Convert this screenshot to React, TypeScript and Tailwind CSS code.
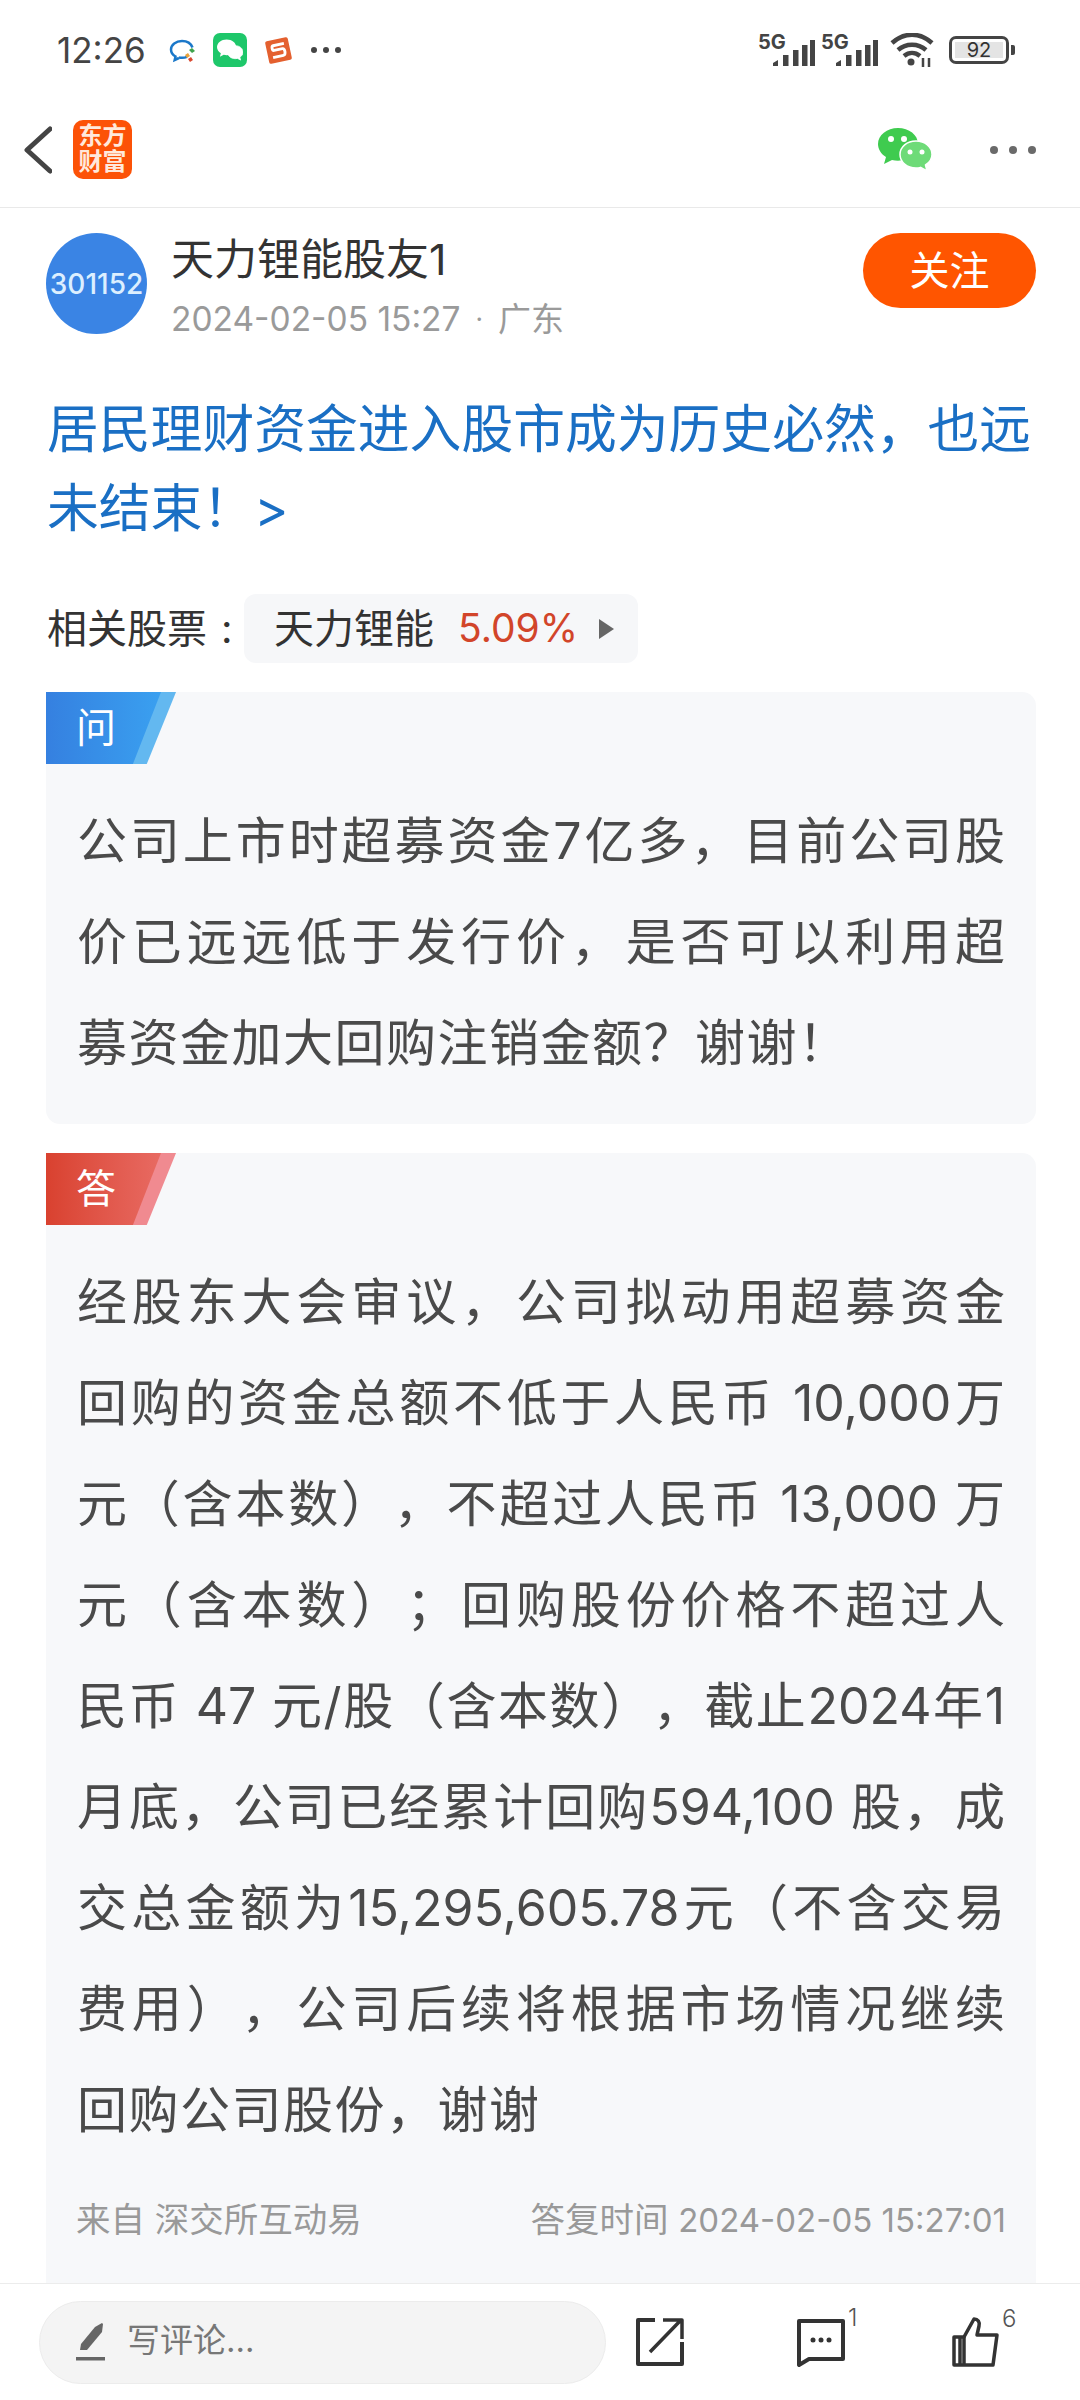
import type { ReactNode } from "react";

const questionLines = [
  "公司上市时超募资金7亿多，目前公司股",
  "价已远远低于发行价，是否可以利用超",
  "募资金加大回购注销金额？谢谢！",
];

const answerLines = [
  "经股东大会审议，公司拟动用超募资金",
  "回购的资金总额不低于人民币 10,000万",
  "元（含本数），不超过人民币 13,000 万",
  "元（含本数）；回购股份价格不超过人",
  "民币 47 元/股（含本数），截止2024年1",
  "月底，公司已经累计回购594,100 股，成",
  "交总金额为15,295,605.78元（不含交易",
  "费用），公司后续将根据市场情况继续",
  "回购公司股份，谢谢",
];

function Bubbles({ className, back, front }: { className: string; back: string; front: string }) {
  return (
    <svg viewBox="0 0 54 44" className={className}>
      <path d="M20 0C9 0 0 7 0 16c0 5 3 10 8 13l-2 7 8-4c2 .5 4 .7 6 .7 11 0 20-7.500 20-16.700S31 0 20 0z" fill={back} />
      <path d="M38 13c-9 0-16 6-16 13.500S29 40 38 40c1.500 0 3-.2 4.500-.6L49 43l-1.500-6c4-2.500 6.500-6.200 6.500-10.500C54 19 47 13 38 13z" fill={front} stroke="#fff" strokeWidth="1.500" />
      <circle cx="13" cy="11" r="3" fill="#fff" />
      <circle cx="26" cy="11" r="3" fill="#fff" />
      <circle cx="32" cy="24" r="2.500" fill="#fff" />
      <circle cx="44" cy="24" r="2.500" fill="#fff" />
    </svg>
  );
}

function Signal() {
  return (
    <div className="relative h-[32px] w-[57px]">
      <span className="absolute left-0 top-0 text-[20px] leading-[17px] font-bold text-[#444]">5G</span>
      <svg viewBox="0 0 42 26" className="absolute right-0 bottom-0 h-[26px] w-[42px]" fill="#444">
        <path d="M0 26v-3l5-3v6zM10 26V15h5.500v11zM20 26V10h5.500v16zM29 26V5h5.500v21zM37 26V0h5v26z" />
      </svg>
    </div>
  );
}

function StatusBar() {
  return (
    <div className="flex h-[100px] items-center pl-[57px] pr-[65px] text-[#444]">
      <span className="w-[86px] whitespace-nowrap text-[35px] leading-none">12:26</span>
      <div className="ml-[22px] flex items-center gap-[14px]">
        <svg viewBox="0 0 34 34" className="h-[34px] w-[34px]">
          <path d="M17 8c-6 0-11 3.500-11 8.500 0 3 1.800 5.500 4.500 7l-.8 3.500 4.300-2" fill="none" stroke="#1b78c9" strokeWidth="2.500" />
          <path d="M14 24.500c1 .2 2 .3 3 .3 2 0 3.500-.3 5-1M17 8c5 0 9 2.500 10.500 6.500" fill="none" stroke="#1b78c9" strokeWidth="2.500" />
          <path d="M24 17l3-2 3 3-3 2z" fill="#3fa34d" />
          <path d="M20 22l3-2 2 3-3 2z" fill="#e9a23b" />
          <path d="M23 26l3-2 2 3-3 2z" fill="#d9482f" />
        </svg>
        <div className="flex h-[34px] w-[34px] items-center justify-center rounded-[7px] bg-[#1ec76a]">
          <Bubbles className="h-[22px] w-[26px]" back="#ffffff" front="#ffffff" />
        </div>
        <div className="flex h-[34px] w-[34px] items-center justify-center">
          <svg viewBox="0 0 26 26" className="h-[25px] w-[25px] -rotate-12">
            <rect x="1" y="1" width="24" height="24" rx="2" fill="#e4602f" />
            <path d="M20 7H8.500C6.500 7 6.500 12 8.500 12h9c2.500 0 2.500 7-.5 7H6" fill="none" stroke="#fff" strokeWidth="3" />
          </svg>
        </div>
        <div className="ml-[2px] flex items-center gap-[6px]">
          <span className="h-[6px] w-[6px] rounded-full bg-[#444]" />
          <span className="h-[6px] w-[6px] rounded-full bg-[#444]" />
          <span className="h-[6px] w-[6px] rounded-full bg-[#444]" />
        </div>
      </div>
      <div className="ml-auto flex items-center gap-[6px]">
        <Signal />
        <Signal />
        <svg viewBox="0 0 44 34" className="ml-[6px] h-[34px] w-[44px]" fill="none" stroke="#444" strokeWidth="4.500">
          <path d="M2 10c12-11 28-11 40 0" />
          <path d="M8 17c8-7 20-7 28 0" />
          <path d="M14 23c5-4 11-4 16 0" />
          <circle cx="21" cy="29" r="3.500" fill="#444" stroke="none" />
          <path d="M33 25v9M39 25v9" strokeWidth="2.500" />
        </svg>
        <div className="ml-[9px] flex items-center gap-[2px]">
          <div className="flex h-[28px] w-[60px] items-center justify-center rounded-[7px] border-[3px] border-[#444] p-[3px]">
            <span className="flex h-full w-full items-center justify-center bg-[#e4e4e4] text-[20px] leading-none text-[#333]">
              92
            </span>
          </div>
          <span className="h-[10px] w-[4px] rounded-r-[2px] bg-[#444]" />
        </div>
      </div>
    </div>
  );
}

function NavBar() {
  return (
    <div className="flex h-[108px] items-center border-b border-[#e9e9e9] pl-[24px] pr-[44px]">
      <svg viewBox="0 0 28 48" className="mb-[8px] h-[48px] w-[28px]" fill="none" stroke="#444" strokeWidth="5" strokeLinecap="round" strokeLinejoin="round">
        <path d="M26 3L3 24l23 21" />
      </svg>
      <div className="mb-[9px] ml-[21px] flex h-[59px] w-[59px] flex-col items-center justify-center rounded-[10px] bg-[#fc5207] text-[24px] leading-[26px] font-bold text-[#ffe9dc]">
        <span>东方</span>
        <span>财富</span>
      </div>
      <Bubbles className="mb-[8px] ml-auto h-[44px] w-[54px]" back="#3fcb4f" front="#6edb78" />
      <div className="mb-[8px] ml-[58px] flex items-center gap-[11px]">
        <span className="h-[8px] w-[8px] rounded-full bg-[#6a6a6a]" />
        <span className="h-[8px] w-[8px] rounded-full bg-[#6a6a6a]" />
        <span className="h-[8px] w-[8px] rounded-full bg-[#6a6a6a]" />
      </div>
    </div>
  );
}

function AuthorRow() {
  return (
    <div className="flex pl-[46px] pr-[44px] pt-[25px]">
      <div className="flex h-[101px] w-[101px] shrink-0 items-center justify-center rounded-full bg-[#3a84e4] text-[28px] font-medium text-[#dcefff]">
        301152
      </div>
      <div className="ml-[24px] min-w-0">
        <div className="pt-[3px] text-[43px] leading-[46px] text-[#333]">天力锂能股友1</div>
        <div className="mt-[15px] flex items-center leading-[44px] text-[#9a9a9a]">
          <span className="text-[33.500px]">2024-02-05 15:27</span>
          <span className="mx-[15px] text-[26px]">·</span>
          <span className="text-[33px]">广东</span>
        </div>
      </div>
      <button
        type="button"
        className="ml-auto flex h-[75px] w-[173px] items-center justify-center rounded-full bg-[#ff5500] text-[40px] text-[#fff]"
      >
        关注
      </button>
    </div>
  );
}

function RelatedStock() {
  return (
    <div className="mt-[46px] flex items-center whitespace-nowrap pl-[47px] text-[40px] text-[#333]">
      <span className="w-[197px]">
        相关股票<span className="ml-[14px]">:</span>
      </span>
      <div className="flex h-[69px] w-[394px] items-center rounded-[12px] bg-[#f6f7f9] pl-[30px]">
        <span>天力锂能</span>
        <span className="ml-[24px] text-[39px] text-[#d2452a]">5.09%</span>
        <svg viewBox="0 0 16 20" className="ml-[20px] h-[20px] w-[16px]" fill="#666">
          <path d="M1 0l15 10L1 20z" />
        </svg>
      </div>
    </div>
  );
}

function Tag({ label, tone }: { label: string; tone: "blue" | "red" }) {
  const strip = tone === "blue" ? "bg-[#63b8f0]" : "bg-[#f08a90]";
  const face =
    tone === "blue"
      ? "bg-gradient-to-r from-[#3580e0] to-[#3aa0f0]"
      : "bg-gradient-to-r from-[#d9412f] to-[#e86a62]";
  return (
    <div className={`h-[72px] w-[130px] rounded-tl-[14px] ${strip} [clip-path:polygon(0_0,100%_0,77.500%_100%,0_100%)]`}>
      <div
        className={`flex h-full w-[115px] items-center pl-[30px] text-[40px] text-[#fff] ${face} [clip-path:polygon(0_0,100%_0,75.600%_100%,0_100%)]`}
      >
        {label}
      </div>
    </div>
  );
}

function Lines({ lines }: { lines: string[] }) {
  return (
    <div className="px-[31px] text-[50px] leading-[101px] text-[#4a4a4a] [text-spacing-trim:space-all]">
      {lines.map((line, i) => (
        // every line but the last is stretched to the full width
        <div key={i} className={i < lines.length - 1 ? "text-justify [text-align-last:justify]" : "tracking-[1.500px]"}>
          {line}
        </div>
      ))}
    </div>
  );
}

function Card({ children }: { children: ReactNode }) {
  return <div className="mx-[46px] w-[990px] rounded-[14px] bg-[#f7f8fa]">{children}</div>;
}

function BottomBar() {
  return (
    <div className="relative flex h-[117px] shrink-0 items-center border-t border-[#ececec] bg-white pl-[39px]">
      <div className="flex h-[83px] w-[567px] items-center rounded-full border border-[#ececec] bg-[#f4f4f4] pl-[36px]">
        <svg viewBox="0 0 30 40" className="h-[40px] w-[30px]" fill="#666">
          <path d="M19 5l7-4 1 1-1 8L11 28H4l1-6z" />
          <rect x="0" y="35" width="29" height="3.500" />
        </svg>
        <span className="mb-[3px] ml-[21px] text-[33px] leading-none text-[#777]">写评论...</span>
      </div>
      <svg viewBox="0 0 48 48" className="ml-[30px] h-[48px] w-[48px]" fill="none" stroke="#333" strokeWidth="4" strokeLinejoin="round">
        <path d="M19 2H2v44h44V24" />
        <path d="M14 34L44 3M27 2h19v19" strokeWidth="3.500" />
      </svg>
      <div className="relative ml-[113px] h-[50px] w-[48px]">
        <svg viewBox="0 0 48 50" className="h-[50px] w-[48px]" fill="none" stroke="#333" strokeWidth="4" strokeLinejoin="round">
          <path d="M2 4h44v38H12L2 48z" />
          <circle cx="16" cy="23" r="2.500" fill="#333" stroke="none" />
          <circle cx="24" cy="23" r="2.500" fill="#333" stroke="none" />
          <circle cx="32" cy="23" r="2.500" fill="#333" stroke="none" />
        </svg>
        <span className="absolute left-[51px] top-[-11px] text-[24px] leading-none font-light text-[#555]">1</span>
      </div>
      <div className="relative ml-[107px] h-[50px] w-[48px]">
        <svg viewBox="0 0 48 50" className="h-[50px] w-[48px]" fill="none" stroke="#333" strokeWidth="3.500" strokeLinejoin="round">
          <path d="M12 20L22 2c4 0 6 3 5 7l-2 9h20l-4 30H2V20z" />
          <path d="M8 20v28M12 20v28" />
        </svg>
        <span className="absolute left-[50px] top-[-10px] text-[24px] leading-none font-light text-[#555]">6</span>
      </div>
    </div>
  );
}

export default function App() {
  return (
    <div className="flex h-[2400px] w-[1080px] flex-col overflow-hidden bg-white font-['Inter','Noto_Sans_CJK_SC',sans-serif]">
      <StatusBar />
      <NavBar />
      <main className="min-h-0 flex-1 overflow-hidden">
        <AuthorRow />
        <h1 className="mt-[49px] whitespace-nowrap px-[47px] text-[51.800px] leading-[79px] font-normal text-[#1a6fc4]">
          <div>居民理财资金进入股市成为历史必然，也远</div>
          <div>未结束！&gt;</div>
        </h1>
        <RelatedStock />
        <div className="mt-[29px]">
          <Card>
            <Tag label="问" tone="blue" />
            <div className="pb-[30px] pt-[27px]">
              <Lines lines={questionLines} />
            </div>
          </Card>
        </div>
        <div className="mt-[29px]">
          <Card>
            <Tag label="答" tone="red" />
            <div className="pt-[27px]">
              <Lines lines={answerLines} />
            </div>
            <div className="mt-[35px] flex items-center justify-between whitespace-nowrap px-[30px] text-[34.500px] leading-[48px] text-[#999]">
              <span>来自 深交所互动易</span>
              <span>
                答复时间 <span className="text-[33px]">2024-02-05 15:27:01</span>
              </span>
            </div>
            <div className="h-[120px]" />
          </Card>
        </div>
      </main>
      <BottomBar />
    </div>
  );
}
